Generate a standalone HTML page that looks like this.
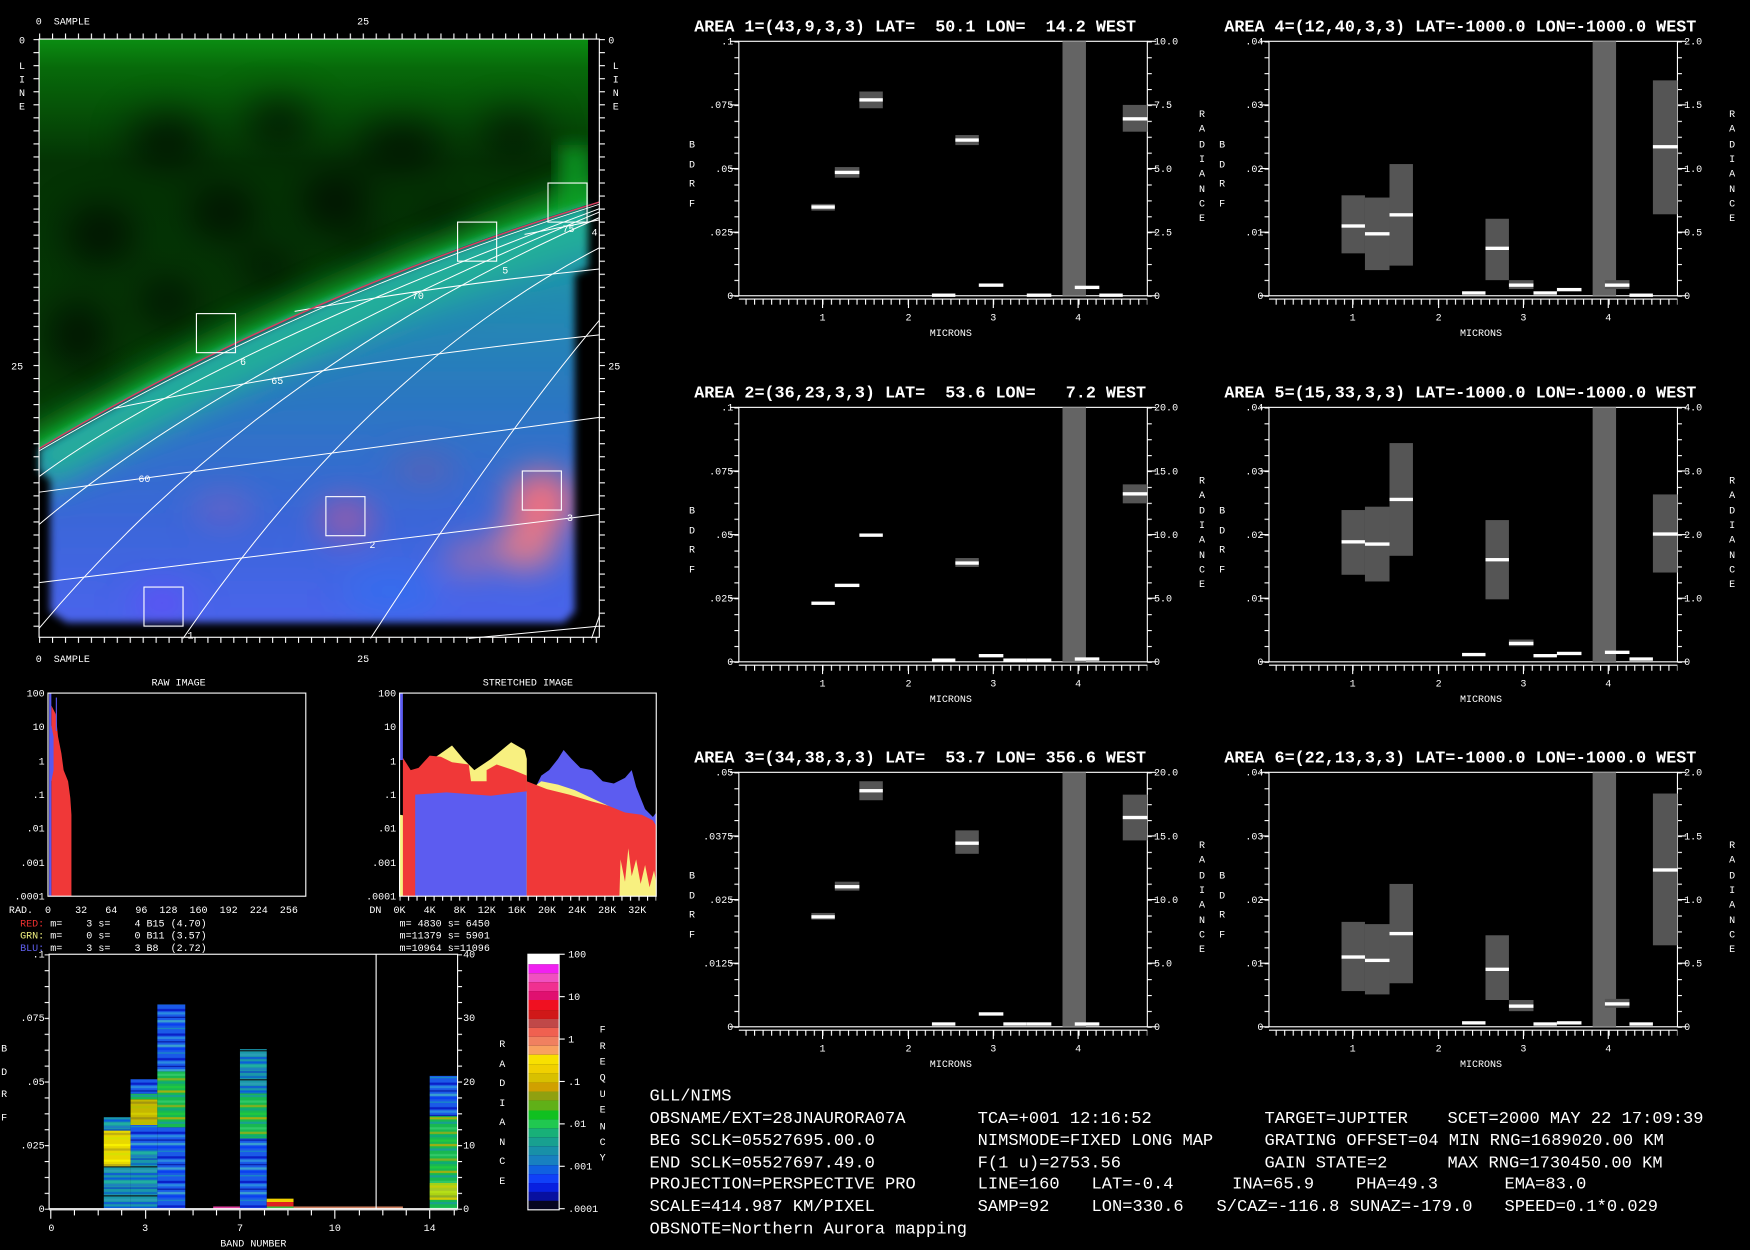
<!DOCTYPE html>
<html><head><meta charset="utf-8"><style>
html,body{margin:0;padding:0;background:#000;}
svg{display:block;}
text{font-family:"Liberation Mono",monospace;fill:#fff;white-space:pre;}
.s{font-size:9px;}
.t{font-size:15px;font-weight:bold;}
.b{font-size:15.3px;}
</style></head><body>
<svg width="1750" height="1250" viewBox="0 0 1568 1120" preserveAspectRatio="none" xmlns="http://www.w3.org/2000/svg">
<defs>
<filter id="blur8" x="-20%" y="-20%" width="140%" height="140%"><feGaussianBlur stdDeviation="8"/></filter>
<filter id="blur4" x="-20%" y="-20%" width="140%" height="140%"><feGaussianBlur stdDeviation="3.5"/></filter>
<filter id="blur14" x="-30%" y="-30%" width="160%" height="160%"><feGaussianBlur stdDeviation="14"/></filter>
<filter id="blur18" x="-40%" y="-40%" width="180%" height="180%"><feGaussianBlur stdDeviation="18"/></filter>
<clipPath id="gclip"><path d="M35,35 H527 V183 Q264,265 35,402 Z"/></clipPath>
<clipPath id="bclip"><path d="M35,402 Q264,265 527,183 V240 L515,246 V548 L505,558 H60 L45,548 V430 L35,422 Z"/></clipPath>
<linearGradient id="gg" x1="0" y1="0" x2="0" y2="1">
<stop offset="0" stop-color="#0b8d12"/><stop offset="0.07" stop-color="#076a0a"/><stop offset="0.3" stop-color="#043304"/><stop offset="1" stop-color="#053a06"/></linearGradient>
<linearGradient id="bg" x1="0" y1="0" x2="0" y2="1">
<stop offset="0" stop-color="#1aa0a0"/><stop offset="0.45" stop-color="#2a78c0"/><stop offset="0.75" stop-color="#3a66d8"/><stop offset="1" stop-color="#4a64ec"/></linearGradient>
<pattern id="tx" width="11.6" height="8" patternUnits="userSpaceOnUse" x="35"><rect x="0" y="0" width="1" height="8" fill="#fff"/></pattern>
<pattern id="ty" width="8" height="11.68" patternUnits="userSpaceOnUse" y="35"><rect x="0" y="0" width="8" height="1" fill="#fff"/></pattern>
<pattern id="px" width="7.65" height="8" patternUnits="userSpaceOnUse" x="-1.7"><rect x="0" y="0" width="1" height="8" fill="#fff"/></pattern>
<pattern id="py" width="8" height="14.25" patternUnits="userSpaceOnUse" y="0"><rect x="0" y="0" width="8" height="1" fill="#fff"/></pattern>
<pattern id="pTeal" width="30" height="26" patternUnits="userSpaceOnUse">
<rect width="30" height="26" fill="#1a98a8"/><rect y="2" width="30" height="2" fill="#0d6fc0"/><rect y="5" width="30" height="1" fill="#111"/><rect y="8" width="30" height="2" fill="#2a9fb5"/><rect y="11" width="30" height="2" fill="#1060d0"/><rect y="15" width="30" height="2" fill="#0a5fd8"/><rect y="18" width="30" height="2" fill="#20b0a0"/><rect y="21" width="30" height="2" fill="#1e80c0"/><rect y="24" width="30" height="1" fill="#0c3cc8"/></pattern>
<pattern id="pBlue" width="30" height="22" patternUnits="userSpaceOnUse">
<rect width="30" height="22" fill="#1a5ae8"/><rect y="2" width="30" height="2" fill="#0a20c8"/><rect y="5" width="30" height="2" fill="#2a8ae0"/><rect y="9" width="30" height="1" fill="#0818a0"/><rect y="12" width="30" height="2" fill="#3aa0d0"/><rect y="15" width="30" height="2" fill="#0a40f0"/><rect y="19" width="30" height="1" fill="#1890c0"/></pattern>
<pattern id="pGreen" width="30" height="24" patternUnits="userSpaceOnUse">
<rect width="30" height="24" fill="#18b850"/><rect y="2" width="30" height="2" fill="#30c868"/><rect y="6" width="30" height="2" fill="#80b020"/><rect y="9" width="30" height="2" fill="#10a878"/><rect y="13" width="30" height="2" fill="#20c840"/><rect y="17" width="30" height="2" fill="#a0b010"/><rect y="21" width="30" height="2" fill="#18a090"/></pattern>
<pattern id="pYel" width="30" height="14" patternUnits="userSpaceOnUse">
<rect width="30" height="14" fill="#e8d800"/><rect y="3" width="30" height="2" fill="#f8f000"/><rect y="7" width="30" height="2" fill="#c0b010"/><rect y="11" width="30" height="2" fill="#d8e000"/></pattern>
<g id="frm">
<rect x="0" y="0" width="366" height="228" fill="none" stroke="#fff" stroke-width="1"/>
<rect x="-4" y="0" width="4" height="229" fill="url(#py)"/>
<rect x="366" y="0" width="4" height="229" fill="url(#py)"/>
<line x1="-8" y1="0" x2="0" y2="0" stroke="#fff"/><line x1="-8" y1="57" x2="0" y2="57" stroke="#fff"/><line x1="-8" y1="114" x2="0" y2="114" stroke="#fff"/><line x1="-8" y1="171" x2="0" y2="171" stroke="#fff"/><line x1="-8" y1="228" x2="0" y2="228" stroke="#fff"/>
<line x1="366" y1="0" x2="374" y2="0" stroke="#fff"/><line x1="366" y1="57" x2="374" y2="57" stroke="#fff"/><line x1="366" y1="114" x2="374" y2="114" stroke="#fff"/><line x1="366" y1="171" x2="374" y2="171" stroke="#fff"/><line x1="366" y1="228" x2="374" y2="228" stroke="#fff"/>
<line x1="0" y1="231" x2="366" y2="231" stroke="#fff"/>
<rect x="4" y="231" width="362" height="5" fill="url(#px)"/>
<line x1="75" y1="231" x2="75" y2="239" stroke="#fff"/><line x1="152" y1="231" x2="152" y2="239" stroke="#fff"/><line x1="228" y1="231" x2="228" y2="239" stroke="#fff"/><line x1="304" y1="231" x2="304" y2="239" stroke="#fff"/>
<text class="s" x="75" y="250" text-anchor="middle">1</text><text class="s" x="152" y="250" text-anchor="middle">2</text><text class="s" x="228" y="250" text-anchor="middle">3</text><text class="s" x="304" y="250" text-anchor="middle">4</text>
<text class="s" x="190" y="264" text-anchor="middle">MICRONS</text>
<text class="s" x="-42" y="95" text-anchor="middle">B</text><text class="s" x="-42" y="113" text-anchor="middle">D</text><text class="s" x="-42" y="130" text-anchor="middle">R</text><text class="s" x="-42" y="148" text-anchor="middle">F</text>
<text class="s" x="415" y="68" text-anchor="middle">R</text><text class="s" x="415" y="81" text-anchor="middle">A</text><text class="s" x="415" y="95" text-anchor="middle">D</text><text class="s" x="415" y="108" text-anchor="middle">I</text><text class="s" x="415" y="121" text-anchor="middle">A</text><text class="s" x="415" y="135" text-anchor="middle">N</text><text class="s" x="415" y="148" text-anchor="middle">C</text><text class="s" x="415" y="161" text-anchor="middle">E</text>
<rect x="290" y="0" width="21" height="228" fill="#646464"/>
</g>
</defs>
<rect width="1568" height="1120" fill="#000"/>

<!-- MAP -->
<g clip-path="url(#gclip)">
<rect x="35" y="35" width="492" height="370" fill="url(#gg)"/>
<g filter="url(#blur18)" fill="#000" opacity="0.7">
<ellipse cx="150" cy="125" rx="35" ry="22"/><ellipse cx="250" cy="110" rx="30" ry="20"/><ellipse cx="360" cy="130" rx="40" ry="20"/><ellipse cx="460" cy="120" rx="30" ry="18"/>
<ellipse cx="90" cy="210" rx="30" ry="25"/><ellipse cx="200" cy="190" rx="30" ry="22"/><ellipse cx="300" cy="180" rx="30" ry="25"/><ellipse cx="400" cy="205" rx="25" ry="15"/>
<ellipse cx="70" cy="300" rx="25" ry="30"/><ellipse cx="150" cy="270" rx="25" ry="20"/><ellipse cx="240" cy="240" rx="25" ry="15"/><ellipse cx="100" cy="360" rx="20" ry="15"/><ellipse cx="330" cy="225" rx="20" ry="10"/>
</g>
<path d="M20,418 Q264,276 560,176" stroke="#14b832" stroke-width="40" fill="none" filter="url(#blur14)" opacity="0.9"/>
<path d="M30,413 Q264,278 560,182" stroke="#1ed84a" stroke-width="12" fill="none" filter="url(#blur8)"/>
<rect x="500" y="130" width="30" height="70" fill="#10a028" filter="url(#blur8)" opacity="0.8"/>
</g>
<g filter="url(#blur4)">
<g clip-path="url(#bclip)">
<rect x="35" y="180" width="492" height="380" fill="url(#bg)"/>
<path d="M30,420 Q264,284 560,190" stroke="#20b098" stroke-width="45" fill="none" filter="url(#blur14)"/>
<g filter="url(#blur14)">
<ellipse cx="485" cy="450" rx="30" ry="28" fill="#f07080"/><ellipse cx="470" cy="490" rx="30" ry="20" fill="#e07a8a"/><ellipse cx="420" cy="500" rx="20" ry="14" fill="#d07090" opacity="0.7"/>
<ellipse cx="310" cy="465" rx="25" ry="18" fill="#9a5aa8"/><ellipse cx="200" cy="455" rx="28" ry="14" fill="#7a60c0" opacity="0.7"/><ellipse cx="145" cy="540" rx="25" ry="15" fill="#6050f8"/><ellipse cx="350" cy="530" rx="40" ry="18" fill="#3070f0" opacity="0.8"/>
<ellipse cx="380" cy="420" rx="30" ry="15" fill="#6a5aa8" opacity="0.6"/>
</g>
</g>
</g>
<g fill="none" stroke="#fff" stroke-width="0.9">
<path d="M35,522 L537,461"/><path d="M35,441 L537,374"/><path d="M102,366 Q300,325 537,300"/><path d="M264,279 Q400,255 537,241"/><path d="M470,210 L537,197"/>
<path d="M35,563 Q230,330 537,195"/><path d="M35,470 Q200,330 537,190"/><path d="M35,427 Q180,320 537,187"/><path d="M164,572 Q330,330 537,222"/><path d="M332,572 Q450,390 537,287"/><path d="M530,572 L537,552"/><path d="M420,572 L537,561"/>
<path d="M35,404 Q264,270 537,183" stroke-width="0.8"/>
</g>
<path d="M35,402 Q264,265 537,181" stroke="#d84060" stroke-width="1.3" fill="none"/>
<g fill="none" stroke="#fff" stroke-width="1">
<rect x="176" y="281" width="35" height="35"/><rect x="410" y="199" width="35" height="35"/><rect x="491" y="164" width="35" height="35"/><rect x="292" y="445" width="35" height="35"/><rect x="468" y="422" width="35" height="35"/><rect x="129" y="526" width="35" height="35"/>
</g>
<g class="s">
<text class="s" x="215" y="327">6</text><text class="s" x="450" y="245">5</text><text class="s" x="530" y="211">4</text><text class="s" x="504" y="208">75</text><text class="s" x="369" y="268">70</text><text class="s" x="243" y="344">65</text><text class="s" x="124" y="432">60</text><text class="s" x="331" y="491">2</text><text class="s" x="508" y="467">3</text><text class="s" x="168" y="572">1</text>
</g>
<rect x="35" y="35" width="502" height="536" fill="none" stroke="#fff" stroke-width="1"/>
<rect x="35" y="30" width="502" height="5" fill="url(#tx)"/>
<rect x="35" y="571" width="502" height="5" fill="url(#tx)"/>
<rect x="30" y="35" width="5" height="536" fill="url(#ty)"/>
<rect x="537" y="35" width="5" height="536" fill="url(#ty)"/>
<text class="s" x="32" y="22">0  SAMPLE</text><text class="s" x="320" y="22">25</text>
<text class="s" x="32" y="593">0  SAMPLE</text><text class="s" x="320" y="593">25</text>
<text class="s" x="17" y="39">0</text><text class="s" x="10" y="331">25</text><text class="s" x="545" y="39">0</text><text class="s" x="545" y="331">25</text>
<text class="s" x="17" y="62">L</text><text class="s" x="17" y="74">I</text><text class="s" x="17" y="86">N</text><text class="s" x="17" y="98">E</text>
<text class="s" x="549" y="62">L</text><text class="s" x="549" y="74">I</text><text class="s" x="549" y="86">N</text><text class="s" x="549" y="98">E</text>

<!-- RAW HIST -->
<text class="s" x="160" y="614" text-anchor="middle">RAW IMAGE</text>
<polygon points="46,803 46,632 50,640 52,660 55,675 57,690 59,695 61,700 63,715 64,730 64,803" fill="#f03838"/>
<polygon points="44,803 44,621 46,621 46,650 48,660 48,690 46,700 46,803" fill="#5858f0"/>
<rect x="50" y="625" width="1" height="30" fill="#5858f0"/>
<rect x="43" y="621" width="231" height="182" fill="none" stroke="#fff"/>
<g class="s" text-anchor="end"><text class="s" x="40" y="624">100</text><text class="s" x="40" y="654">10</text><text class="s" x="40" y="685">1</text><text class="s" x="40" y="715">.1</text><text class="s" x="40" y="745">.01</text><text class="s" x="40" y="776">.001</text><text class="s" x="40" y="806">.0001</text></g>
<text class="s" x="8" y="818">RAD.  0    32   64   96  128  160  192  224  256</text>
<text class="s" x="18" y="830"><tspan fill="#f03030">RED:</tspan> m=    3 s=    4 B15 (4.70)</text>
<text class="s" x="18" y="841"><tspan fill="#f0f080">GRN:</tspan> m=    0 s=    0 B11 (3.57)</text>
<text class="s" x="18" y="852"><tspan fill="#6060f0">BLU:</tspan> m=    3 s=    3 B8  (2.72)</text>

<!-- STRETCHED -->
<text class="s" x="473" y="614" text-anchor="middle">STRETCHED IMAGE</text>
<polygon points="358,803 358,730 372,732 375,690 385,682 395,675 405,668 415,680 425,690 440,680 458,665 470,672 472,680 472,803" fill="#f8f080"/>
<polygon points="361,803 361,679 368,690 375,688 385,677 395,678 405,683 420,685 422,700 436,700 436,690 445,685 460,690 472,695 472,803" fill="#f03838"/>
<polygon points="372,803 372,712 400,710 440,713 472,709 472,803" fill="#5c5cf0"/>
<rect x="358" y="621" width="3" height="60" fill="#5c5cf0"/>
<polygon points="472,803 472,712 480,705 485,695 492,690 500,680 505,672 512,680 520,688 530,690 540,700 550,702 560,697 566,690 570,705 578,725 585,732 588,728 588,803" fill="#5c5cf0"/>
<polygon points="472,803 472,710 485,700 500,703 515,708 530,715 545,722 555,728 565,735 575,738 588,742 588,803" fill="#f8f080"/>
<polygon points="472,803 472,700 490,707 510,712 530,718 545,722 560,728 575,730 585,735 588,740 588,803" fill="#f03838"/>
<polygon points="555,803 556,770 560,790 563,760 566,785 570,770 574,792 578,775 582,795 586,780 588,790 588,803" fill="#f8f080"/>
<rect x="358" y="621" width="230" height="182" fill="none" stroke="#fff"/>
<g text-anchor="end"><text class="s" x="355" y="624">100</text><text class="s" x="355" y="654">10</text><text class="s" x="355" y="685">1</text><text class="s" x="355" y="715">.1</text><text class="s" x="355" y="745">.01</text><text class="s" x="355" y="776">.001</text><text class="s" x="355" y="806">.0001</text></g>
<rect x="358" y="803" width="230" height="4" fill="url(#px)"/>
<text class="s" x="331" y="818">DN  0K   4K   8K  12K  16K  20K  24K  28K  32K</text>
<text class="s" x="358" y="830">m= 4830 s= 6450</text><text class="s" x="358" y="841">m=11379 s= 5901</text><text class="s" x="358" y="852">m=10964 s=11096</text>

<!-- BAND CHART -->
<rect x="93" y="1045" width="24" height="38" fill="url(#pTeal)"/><rect x="93" y="1013" width="24" height="32" fill="url(#pYel)"/><rect x="93" y="1001" width="24" height="12" fill="url(#pTeal)"/>
<rect x="117" y="1030" width="24" height="53" fill="url(#pTeal)"/><rect x="117" y="1008" width="24" height="22" fill="url(#pBlue)"/><rect x="117" y="985" width="24" height="23" fill="url(#pYel)" opacity="0.85"/><rect x="117" y="980" width="24" height="5" fill="url(#pGreen)"/><rect x="117" y="967" width="24" height="13" fill="url(#pBlue)"/>
<rect x="141" y="1010" width="25" height="73" fill="url(#pBlue)"/><rect x="141" y="960" width="25" height="50" fill="url(#pGreen)"/><rect x="141" y="900" width="25" height="60" fill="url(#pBlue)"/>
<rect x="215" y="1020" width="24" height="63" fill="url(#pBlue)"/><rect x="215" y="980" width="24" height="40" fill="url(#pGreen)"/><rect x="215" y="940" width="24" height="40" fill="url(#pTeal)"/>
<rect x="239" y="1074" width="24" height="3" fill="#f0d000"/><rect x="239" y="1077" width="24" height="4" fill="#e02020"/><rect x="239" y="1081" width="24" height="2" fill="#40c040"/>
<rect x="191" y="1081" width="24" height="2" fill="#e040a0"/><rect x="263" y="1081" width="98" height="2" fill="#d08060"/>
<rect x="385" y="1000" width="25" height="83" fill="url(#pGreen)"/><rect x="385" y="1060" width="25" height="15" fill="url(#pYel)" opacity="0.7"/><rect x="385" y="964" width="25" height="36" fill="url(#pBlue)"/>
<rect x="44" y="855" width="366" height="228" fill="none" stroke="#fff"/>
<line x1="337" y1="855" x2="337" y2="1083" stroke="#fff"/>
<rect x="40" y="855" width="4" height="229" fill="url(#py)"/><rect x="410" y="855" width="4" height="229" fill="url(#py)"/>
<line x1="44" y1="1084" x2="410" y2="1084" stroke="#fff"/>
<g stroke="#fff"><line x1="45.5" y1="1084" x2="45.5" y2="1092"/><line x1="66.7" y1="1084" x2="66.7" y2="1089"/><line x1="88" y1="1084" x2="88" y2="1089"/><line x1="109" y1="1084" x2="109" y2="1089"/><line x1="130.5" y1="1084" x2="130.5" y2="1092"/><line x1="151.7" y1="1084" x2="151.7" y2="1089"/><line x1="173" y1="1084" x2="173" y2="1089"/><line x1="194" y1="1084" x2="194" y2="1089"/><line x1="215" y1="1084" x2="215" y2="1092"/><line x1="237" y1="1084" x2="237" y2="1089"/><line x1="258" y1="1084" x2="258" y2="1089"/><line x1="279" y1="1084" x2="279" y2="1089"/><line x1="300" y1="1084" x2="300" y2="1092"/><line x1="322" y1="1084" x2="322" y2="1089"/><line x1="343" y1="1084" x2="343" y2="1089"/><line x1="364" y1="1084" x2="364" y2="1089"/><line x1="385" y1="1084" x2="385" y2="1092"/><line x1="407" y1="1084" x2="407" y2="1089"/></g>
<g text-anchor="end"><text class="s" x="40" y="858">.1</text><text class="s" x="40" y="915">.075</text><text class="s" x="40" y="972">.05</text><text class="s" x="40" y="1029">.025</text><text class="s" x="40" y="1086">0</text></g>
<text class="s" x="415" y="858">40</text><text class="s" x="415" y="915">30</text><text class="s" x="415" y="972">20</text><text class="s" x="415" y="1029">10</text><text class="s" x="415" y="1086">0</text>
<g text-anchor="middle"><text class="s" x="46" y="1103">0</text><text class="s" x="130" y="1103">3</text><text class="s" x="215" y="1103">7</text><text class="s" x="300" y="1103">10</text><text class="s" x="385" y="1103">14</text></g>
<text class="s" x="227" y="1117" text-anchor="middle">BAND NUMBER</text>
<text class="s" x="1" y="942">B</text><text class="s" x="1" y="963">D</text><text class="s" x="1" y="983">R</text><text class="s" x="1" y="1004">F</text>
<g text-anchor="middle"><text class="s" x="450" y="938">R</text><text class="s" x="450" y="956">A</text><text class="s" x="450" y="973">D</text><text class="s" x="450" y="991">I</text><text class="s" x="450" y="1008">A</text><text class="s" x="450" y="1026">N</text><text class="s" x="450" y="1043">C</text><text class="s" x="450" y="1061">E</text>
<text class="s" x="540" y="925">F</text><text class="s" x="540" y="940">R</text><text class="s" x="540" y="954">E</text><text class="s" x="540" y="968">Q</text><text class="s" x="540" y="983">U</text><text class="s" x="540" y="997">E</text><text class="s" x="540" y="1012">N</text><text class="s" x="540" y="1026">C</text><text class="s" x="540" y="1040">Y</text></g>
<!-- colorbar -->
<g>
<rect x="473" y="855" width="28" height="9" fill="#fff"/>
<rect x="473" y="864" width="28" height="8" fill="#f020f0"/><rect x="473" y="872" width="28" height="8" fill="#f050c0"/><rect x="473" y="880" width="28" height="8" fill="#f03090"/><rect x="473" y="888" width="28" height="8" fill="#e01070"/><rect x="473" y="896" width="28" height="9" fill="#f01020"/><rect x="473" y="905" width="28" height="8" fill="#d01818"/><rect x="473" y="913" width="28" height="8" fill="#c04848"/><rect x="473" y="921" width="28" height="8" fill="#f06050"/><rect x="473" y="929" width="28" height="8" fill="#f08060"/><rect x="473" y="937" width="28" height="8" fill="#f8a060"/><rect x="473" y="945" width="28" height="9" fill="#f8e000"/><rect x="473" y="954" width="28" height="8" fill="#f0d000"/><rect x="473" y="962" width="28" height="8" fill="#d8c000"/><rect x="473" y="970" width="28" height="8" fill="#d0a000"/><rect x="473" y="978" width="28" height="8" fill="#90a010"/><rect x="473" y="986" width="28" height="9" fill="#60b018"/><rect x="473" y="995" width="28" height="8" fill="#10c020"/><rect x="473" y="1003" width="28" height="8" fill="#20c850"/><rect x="473" y="1011" width="28" height="8" fill="#18b078"/><rect x="473" y="1019" width="28" height="8" fill="#18a090"/><rect x="473" y="1027" width="28" height="8" fill="#1890a8"/><rect x="473" y="1035" width="28" height="9" fill="#1880c0"/><rect x="473" y="1044" width="28" height="8" fill="#1060e0"/><rect x="473" y="1052" width="28" height="8" fill="#1040f8"/><rect x="473" y="1060" width="28" height="8" fill="#0820e0"/><rect x="473" y="1068" width="28" height="8" fill="#0810a0"/><rect x="473" y="1076" width="28" height="8" fill="#050520"/>
<rect x="473" y="855" width="28" height="229" fill="none" stroke="#fff"/>
<g stroke="#fff"><line x1="501" y1="855" x2="506" y2="855"/><line x1="501" y1="893" x2="506" y2="893"/><line x1="501" y1="931" x2="506" y2="931"/><line x1="501" y1="969" x2="506" y2="969"/><line x1="501" y1="1007" x2="506" y2="1007"/><line x1="501" y1="1045" x2="506" y2="1045"/><line x1="501" y1="1083" x2="506" y2="1083"/></g>
<text class="s" x="509" y="858">100</text><text class="s" x="509" y="896">10</text><text class="s" x="509" y="934">1</text><text class="s" x="509" y="972">.1</text><text class="s" x="509" y="1010">.01</text><text class="s" x="509" y="1048">.001</text><text class="s" x="509" y="1086">.0001</text>
</g>

<!-- PANELS -->
<g transform="translate(662,37)">
<text class="t" x="-40" y="-9">AREA 1=(43,9,3,3) LAT=  50.1 LON=  14.2 WEST</text>
<use href="#frm"/>
<g text-anchor="end"><text class="s" x="-5" y="3">.1</text><text class="s" x="-5" y="60">.075</text><text class="s" x="-5" y="117">.05</text><text class="s" x="-5" y="174">.025</text><text class="s" x="-5" y="231">0</text></g>
<text class="s" x="372" y="3">10.0</text><text class="s" x="372" y="60">7.5</text><text class="s" x="372" y="117">5.0</text><text class="s" x="372" y="174">2.5</text><text class="s" x="372" y="231">0</text>
<g fill="#555"><rect x="65" y="145.7" width="21" height="6"/><rect x="86" y="112.7" width="22" height="9.5"/><rect x="108" y="45" width="21" height="15"/><rect x="194" y="84" width="21" height="9"/><rect x="344" y="57" width="22" height="24"/></g>
<g fill="#fff"><rect x="65" y="147" width="21" height="3"/><rect x="86" y="116" width="22" height="3"/><rect x="108" y="51" width="21" height="3"/><rect x="173" y="226" width="21" height="3"/><rect x="194" y="87" width="21" height="3"/><rect x="215" y="217" width="22" height="3"/><rect x="258" y="226" width="22" height="3"/><rect x="301" y="219" width="22" height="3"/><rect x="323" y="226" width="21" height="3"/><rect x="344" y="68" width="22" height="3"/></g>
</g>
<g transform="translate(662,365)">
<text class="t" x="-40" y="-9">AREA 2=(36,23,3,3) LAT=  53.6 LON=   7.2 WEST</text>
<use href="#frm"/>
<g text-anchor="end"><text class="s" x="-5" y="3">.1</text><text class="s" x="-5" y="60">.075</text><text class="s" x="-5" y="117">.05</text><text class="s" x="-5" y="174">.025</text><text class="s" x="-5" y="231">0</text></g>
<text class="s" x="372" y="3">20.0</text><text class="s" x="372" y="60">15.0</text><text class="s" x="372" y="117">10.0</text><text class="s" x="372" y="174">5.0</text><text class="s" x="372" y="231">0</text>
<g fill="#555"><rect x="194" y="135" width="21" height="8"/><rect x="344" y="69" width="22" height="17"/></g>
<g fill="#fff"><rect x="65" y="174" width="21" height="3"/><rect x="86" y="158" width="22" height="3"/><rect x="108" y="113" width="21" height="3"/><rect x="173" y="225" width="21" height="3"/><rect x="194" y="138" width="21" height="3"/><rect x="215" y="221" width="22" height="3"/><rect x="237" y="225" width="21" height="3"/><rect x="258" y="225" width="22" height="3"/><rect x="301" y="224" width="22" height="3"/><rect x="344" y="76" width="22" height="3"/></g>
</g>
<g transform="translate(662,692)">
<text class="t" x="-40" y="-9">AREA 3=(34,38,3,3) LAT=  53.7 LON= 356.6 WEST</text>
<use href="#frm"/>
<g text-anchor="end"><text class="s" x="-5" y="3">.05</text><text class="s" x="-5" y="60">.0375</text><text class="s" x="-5" y="117">.025</text><text class="s" x="-5" y="174">.0125</text><text class="s" x="-5" y="231">0</text></g>
<text class="s" x="372" y="3">20.0</text><text class="s" x="372" y="60">15.0</text><text class="s" x="372" y="117">10.0</text><text class="s" x="372" y="174">5.0</text><text class="s" x="372" y="231">0</text>
<g fill="#555"><rect x="65" y="126" width="21" height="6"/><rect x="86" y="98" width="22" height="8"/><rect x="108" y="8" width="21" height="17"/><rect x="194" y="52" width="21" height="21"/><rect x="344" y="20" width="22" height="41"/></g>
<g fill="#fff"><rect x="65" y="128" width="21" height="3"/><rect x="86" y="101" width="22" height="3"/><rect x="108" y="15" width="21" height="3"/><rect x="173" y="224" width="21" height="3"/><rect x="194" y="62" width="21" height="3"/><rect x="215" y="215" width="22" height="3"/><rect x="237" y="224" width="21" height="3"/><rect x="258" y="224" width="22" height="3"/><rect x="301" y="224" width="22" height="3"/><rect x="344" y="39" width="22" height="3"/></g>
</g>
<g transform="translate(1137,37)">
<text class="t" x="-40" y="-9">AREA 4=(12,40,3,3) LAT=-1000.0 LON=-1000.0 WEST</text>
<use href="#frm"/>
<g text-anchor="end"><text class="s" x="-5" y="3">.04</text><text class="s" x="-5" y="60">.03</text><text class="s" x="-5" y="117">.02</text><text class="s" x="-5" y="174">.01</text><text class="s" x="-5" y="231">0</text></g>
<text class="s" x="372" y="3">2.0</text><text class="s" x="372" y="60">1.5</text><text class="s" x="372" y="117">1.0</text><text class="s" x="372" y="174">0.5</text><text class="s" x="372" y="231">0</text>
<g fill="#555"><rect x="65" y="138" width="21" height="52"/><rect x="86" y="140" width="22" height="65"/><rect x="108" y="110" width="21" height="91"/><rect x="194" y="159" width="21" height="55"/><rect x="215" y="214" width="22" height="8"/><rect x="301" y="214" width="22" height="8"/><rect x="344" y="35" width="22" height="120"/></g>
<g fill="#fff"><rect x="65" y="164" width="21" height="3"/><rect x="86" y="171" width="22" height="3"/><rect x="108" y="154" width="21" height="3"/><rect x="173" y="224" width="21" height="3"/><rect x="194" y="184" width="21" height="3"/><rect x="215" y="217" width="22" height="3"/><rect x="237" y="224" width="21" height="3"/><rect x="258" y="221" width="22" height="3"/><rect x="301" y="217" width="22" height="3"/><rect x="323" y="226" width="21" height="3"/><rect x="344" y="93" width="22" height="3"/></g>
</g>
<g transform="translate(1137,365)">
<text class="t" x="-40" y="-9">AREA 5=(15,33,3,3) LAT=-1000.0 LON=-1000.0 WEST</text>
<use href="#frm"/>
<g text-anchor="end"><text class="s" x="-5" y="3">.04</text><text class="s" x="-5" y="60">.03</text><text class="s" x="-5" y="117">.02</text><text class="s" x="-5" y="174">.01</text><text class="s" x="-5" y="231">0</text></g>
<text class="s" x="372" y="3">4.0</text><text class="s" x="372" y="60">3.0</text><text class="s" x="372" y="117">2.0</text><text class="s" x="372" y="174">1.0</text><text class="s" x="372" y="231">0</text>
<g fill="#555"><rect x="65" y="92" width="21" height="58"/><rect x="86" y="89" width="22" height="67"/><rect x="108" y="32" width="21" height="101"/><rect x="194" y="101" width="21" height="71"/><rect x="215" y="208" width="22" height="6"/><rect x="344" y="78" width="22" height="70"/></g>
<g fill="#fff"><rect x="65" y="119" width="21" height="3"/><rect x="86" y="121" width="22" height="3"/><rect x="108" y="81" width="21" height="3"/><rect x="173" y="220" width="21" height="3"/><rect x="194" y="135" width="21" height="3"/><rect x="215" y="210" width="22" height="3"/><rect x="237" y="221" width="21" height="3"/><rect x="258" y="219" width="22" height="3"/><rect x="301" y="218" width="22" height="3"/><rect x="323" y="224" width="21" height="3"/><rect x="344" y="112" width="22" height="3"/></g>
</g>
<g transform="translate(1137,692)">
<text class="t" x="-40" y="-9">AREA 6=(22,13,3,3) LAT=-1000.0 LON=-1000.0 WEST</text>
<use href="#frm"/>
<g text-anchor="end"><text class="s" x="-5" y="3">.04</text><text class="s" x="-5" y="60">.03</text><text class="s" x="-5" y="117">.02</text><text class="s" x="-5" y="174">.01</text><text class="s" x="-5" y="231">0</text></g>
<text class="s" x="372" y="3">2.0</text><text class="s" x="372" y="60">1.5</text><text class="s" x="372" y="117">1.0</text><text class="s" x="372" y="174">0.5</text><text class="s" x="372" y="231">0</text>
<g fill="#555"><rect x="65" y="134" width="21" height="62"/><rect x="86" y="136" width="22" height="63"/><rect x="108" y="100" width="21" height="89"/><rect x="194" y="146" width="21" height="58"/><rect x="215" y="204" width="22" height="10"/><rect x="301" y="203" width="22" height="8"/><rect x="344" y="19" width="22" height="136"/></g>
<g fill="#fff"><rect x="65" y="164" width="21" height="3"/><rect x="86" y="167" width="22" height="3"/><rect x="108" y="143" width="21" height="3"/><rect x="173" y="223" width="21" height="3"/><rect x="194" y="175" width="21" height="3"/><rect x="215" y="208" width="22" height="3"/><rect x="237" y="224" width="21" height="3"/><rect x="258" y="223" width="22" height="3"/><rect x="301" y="206" width="22" height="3"/><rect x="323" y="224" width="21" height="3"/><rect x="344" y="86" width="22" height="3"/></g>
</g>

<!-- BOTTOM TEXT -->
<g class="b">
<text class="b" x="582" y="986">GLL/NIMS</text>
<text class="b" x="582" y="1006">OBSNAME/EXT=28JNAURORA07A</text><text class="b" x="876" y="1006">TCA=+001 12:16:52</text><text class="b" x="1133" y="1006">TARGET=JUPITER</text><text class="b" x="1297" y="1006">SCET=2000 MAY 22 17:09:39</text>
<text class="b" x="582" y="1026">BEG SCLK=05527695.00.0</text><text class="b" x="876" y="1026">NIMSMODE=FIXED LONG MAP</text><text class="b" x="1133" y="1026">GRATING OFFSET=04 MIN RNG=1689020.00 KM</text>
<text class="b" x="582" y="1046">END SCLK=05527697.49.0</text><text class="b" x="876" y="1046">F(1 u)=2753.56</text><text class="b" x="1133" y="1046">GAIN STATE=2</text><text class="b" x="1297" y="1046">MAX RNG=1730450.00 KM</text>
<text class="b" x="582" y="1065">PROJECTION=PERSPECTIVE PRO</text><text class="b" x="876" y="1065">LINE=160</text><text class="b" x="978" y="1065">LAT=-0.4</text><text class="b" x="1104" y="1065">INA=65.9</text><text class="b" x="1215" y="1065">PHA=49.3</text><text class="b" x="1348" y="1065">EMA=83.0</text>
<text class="b" x="582" y="1085">SCALE=414.987 KM/PIXEL</text><text class="b" x="876" y="1085">SAMP=92</text><text class="b" x="978" y="1085">LON=330.6</text><text class="b" x="1090" y="1085">S/CAZ=-116.8 SUNAZ=-179.0</text><text class="b" x="1348" y="1085">SPEED=0.1*0.029</text>
<text class="b" x="582" y="1105">OBSNOTE=Northern Aurora mapping</text>
</g>
</svg>
</body></html>
